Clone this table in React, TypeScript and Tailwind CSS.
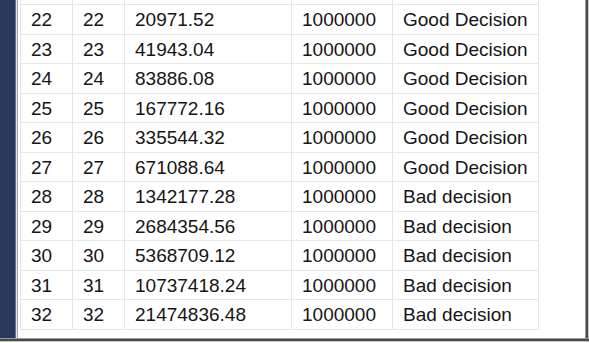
const rows = [
  [22, "20971.52", "Good Decision"],
  [23, "41943.04", "Good Decision"],
  [24, "83886.08", "Good Decision"],
  [25, "167772.16", "Good Decision"],
  [26, "335544.32", "Good Decision"],
  [27, "671088.64", "Good Decision"],
  [28, "1342177.28", "Bad decision"],
  [29, "2684354.56", "Bad decision"],
  [30, "5368709.12", "Bad decision"],
  [31, "10737418.24", "Bad decision"],
  [32, "21474836.48", "Bad decision"],
] as const;

const cell = "border-r border-b border-[#e6e6e6] pl-[10px] pb-[3px] whitespace-nowrap";

export default function App() {
  return (
    <div
      className="w-[589px] h-[343px] bg-white flex flex-col overflow-hidden"
      style={{ fontFamily: '"Liberation Sans", Arial, sans-serif' }}
    >
      <div className="flex h-[338px]">
        {/* left navy panel edge */}
        <div className="w-[15px] bg-[#283a5a]" />
        <div className="w-[1px] bg-[#6b7488]" />
        <div className="w-[1px] bg-[#e2e2e2]" />
        <div className="w-[1px] bg-[#a8a8a8]" />
        <div className="flex-1 bg-white pl-[2px]">
          <div className="border-l border-[#e6e6e6] w-[519px]">
            <div className="flex h-[5px] border-b border-[#e6e6e6]">
              <div className="w-[52px] border-r border-[#e6e6e6]" />
              <div className="w-[52px] border-r border-[#e6e6e6]" />
              <div className="w-[167px] border-r border-[#e6e6e6]" />
              <div className="w-[101px] border-r border-[#e6e6e6]" />
              <div className="w-[146px] border-r border-[#e6e6e6]" />
            </div>
            {rows.map(([n, v, d]) => (
              <div
                key={n}
                className="flex h-[29.5px] items-center text-[19px] leading-[29.5px] text-[#151515]"
              >
                <div className={`${cell} w-[52px] h-full`}>{n}</div>
                <div className={`${cell} w-[52px] h-full`}>{n}</div>
                <div className={`${cell} w-[167px] h-full`}>{v}</div>
                <div className={`${cell} w-[101px] h-full`}>1000000</div>
                <div className={`${cell} w-[146px] h-full`}>{d}</div>
              </div>
            ))}
          </div>
        </div>
        {/* right shadow */}
        <div className="w-[1px] bg-[#9a9a9a]" />
        <div className="w-[2px] bg-[#4a4a4a]" />
        <div className="w-[1px] bg-[#c8c8c8]" />
      </div>
      <div className="h-[1px] bg-[#9a9a9a]" />
      <div className="h-[2px] bg-[#4a4a4a]" />
      <div className="h-[1px] bg-[#c8c8c8]" />
      <div className="flex-1 bg-white" />
    </div>
  );
}
